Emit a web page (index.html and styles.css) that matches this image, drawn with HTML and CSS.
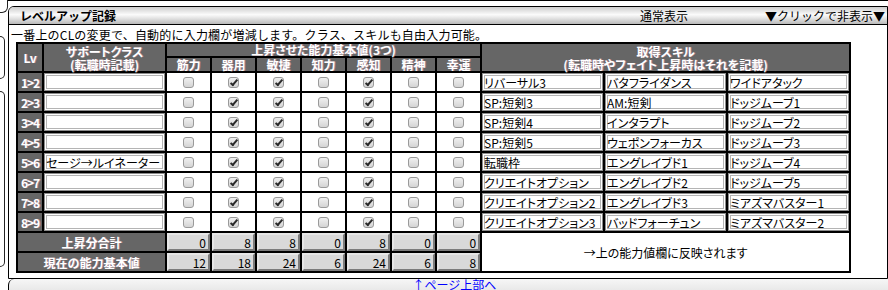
FILE: index.html
```html
<!DOCTYPE html>
<html lang="ja">
<head>
    <meta charset="UTF-8">
    <title>レベルアップ記録</title>
    <link rel="stylesheet" href="styles.css">
</head>
<body>
<div class="page">
    <div class="side">
        <div class="side-tab tab-a"></div>
        <div class="side-tab tab-b"></div>
        <div class="side-tab tab-c"></div>
    </div>

    <div class="main">
        <div class="prev-panel"></div>

        <div class="panel">
            <div class="panel-head">
                <span class="title">レベルアップ記録</span>
                <span class="mode">通常表示</span>
                <span class="toggle">▼クリックで非表示▼</span>
            </div>

            <div class="panel-body">
                <p class="note">一番上のCLの変更で、自動的に入力欄が増減します。クラス、スキルも自由入力可能。</p>

                <table class="lv-table">
                    <colgroup>
                        <col class="c-lv">
                        <col class="c-class">
                        <col class="c-stat"><col class="c-stat"><col class="c-stat"><col class="c-stat">
                        <col class="c-stat"><col class="c-stat"><col class="c-stat">
                        <col class="c-skill"><col class="c-skill"><col class="c-skill">
                    </colgroup>
                    <thead>
                        <tr class="h-top">
                            <th rowspan="2">Lv</th>
                            <th rowspan="2" class="two-line">サポートクラス<br>(転職時記載)</th>
                            <th colspan="7">上昇させた能力基本値(3つ)</th>
                            <th colspan="3" rowspan="2" class="two-line">取得スキル<br>(転職時やフェイト上昇時はそれを記載)</th>
                        </tr>
                        <tr class="h-sub">
                            <th>筋力</th><th>器用</th><th>敏捷</th><th>知力</th><th>感知</th><th>精神</th><th>幸運</th>
                        </tr>
                    </thead>
                    <tbody id="levelRows">
                        <!-- rows are built by the script below -->
                    </tbody>
                    <tbody>
                        <tr class="sum-row">
                            <th colspan="2">上昇分合計</th>
                            <td><input class="in-num" type="text" value="0" readonly></td>
                            <td><input class="in-num" type="text" value="8" readonly></td>
                            <td><input class="in-num" type="text" value="8" readonly></td>
                            <td><input class="in-num" type="text" value="0" readonly></td>
                            <td><input class="in-num" type="text" value="8" readonly></td>
                            <td><input class="in-num" type="text" value="0" readonly></td>
                            <td><input class="in-num" type="text" value="0" readonly></td>
                            <td colspan="3" rowspan="2" class="reflect">→上の能力値欄に反映されます</td>
                        </tr>
                        <tr class="sum-row">
                            <th colspan="2">現在の能力基本値</th>
                            <td><input class="in-num" type="text" value="12" readonly></td>
                            <td><input class="in-num" type="text" value="18" readonly></td>
                            <td><input class="in-num" type="text" value="24" readonly></td>
                            <td><input class="in-num" type="text" value="6" readonly></td>
                            <td><input class="in-num" type="text" value="24" readonly></td>
                            <td><input class="in-num" type="text" value="6" readonly></td>
                            <td><input class="in-num" type="text" value="8" readonly></td>
                        </tr>
                    </tbody>
                </table>
            </div>
        </div>

        <div class="page-foot"><a href="#top">↑ページ上部へ</a></div>
    </div>
</div>

<script>
    // レベルごとの記録
    const levels = [
        { cls: "", skills: ["リバーサル3", "バタフライダンス", "ワイドアタック"] },
        { cls: "", skills: ["SP:短剣3", "AM:短剣", "ドッジムーブ1"] },
        { cls: "", skills: ["SP:短剣4", "インタラプト", "ドッジムーブ2"] },
        { cls: "", skills: ["SP:短剣5", "ウェポンフォーカス", "ドッジムーブ3"] },
        { cls: "セージ→ルイネーター", skills: ["転職枠", "エングレイブド1", "ドッジムーブ4"] },
        { cls: "", skills: ["クリエイトオプション", "エングレイブド2", "ドッジムーブ5"] },
        { cls: "", skills: ["クリエイトオプション2", "エングレイブド3", "ミアズマバスター1"] },
        { cls: "", skills: ["クリエイトオプション3", "バッドフォーチュン", "ミアズマバスター2"] }
    ];
    // 筋力 器用 敏捷 知力 感知 精神 幸運
    const picks = [false, true, true, false, true, false, false];

    const tbody = document.getElementById('levelRows');
    levels.forEach((lv, i) => {
        const row = document.createElement('tr');
        let html = `<th class="lv">${i + 1}&gt;${i + 2}</th>`;
        html += `<td><input class="in-text" type="text" value="${lv.cls}"></td>`;
        picks.forEach(on => {
            html += `<td class="chk-cell"><input class="chk" type="checkbox"${on ? ' checked' : ''}></td>`;
        });
        lv.skills.forEach(s => {
            html += `<td><input class="in-text" type="text" value="${s}"></td>`;
        });
        row.innerHTML = html;
        tbody.appendChild(row);
    });
</script>
</body>
</html>
```

FILE: styles.css
```css
body {
    margin: 0;
    font-family: "Noto Sans CJK JP", sans-serif;
    font-size: 12px;
    color: #000;
    background: #fff;
    overflow: hidden;
}
.page {
    display: flex;
}

/* tabs of the side menu, only their edge shows */
.side {
    width: 8px;
    flex-shrink: 0;
}
.side-tab {
    border: 1px solid #222;
    border-left: none;
    border-radius: 0 6px 6px 0;
}
.tab-a {
    width: 7px;
    height: 31px;
    margin-top: -20px;
}
.tab-b {
    width: 4px;
    height: 41px;
    margin-top: 23px;
}
.tab-c {
    width: 4px;
    height: 174px;
    margin-top: 12px;
}

.main {
    width: 880px;
    flex-shrink: 0;
}
.prev-panel {
    height: 0;
    border-bottom: 1px solid #000;
}

.panel {
    margin-top: 5px;
    border: 1px solid #000;
    border-top-left-radius: 6px;
}
.panel-head {
    display: flex;
    height: 17px;
    line-height: 17px;
    padding: 0 2px 0 11px;
    border-bottom: 1px solid #000;
    border-top-left-radius: 5px;
    background: linear-gradient(#cdcdcd, #fbfbfb 45%, #e8e8e8 62%, #bababa);
}
.title {
    font-weight: bold;
}
.mode {
    margin-left: auto;
}
.toggle {
    margin-left: 77px;
}
.panel-body {
    padding: 3px 0 5px 2px;
}
.note {
    margin: 0;
    line-height: 14px;
    letter-spacing: 0.2px;
}

.lv-table {
    margin-left: 5px;
    width: 835px;
    table-layout: fixed;
    border: 1px solid #000;
    border-spacing: 0;
    font-feature-settings: "palt" 1;
}
.c-lv { width: 26px; }
.c-class { width: 123px; }
.c-stat { width: 45px; }
.c-skill { width: 123px; }

.lv-table th, .lv-table td {
    border: 1px solid #000;
    padding: 0;
}
.lv-table th {
    background: #666;
    color: #fff;
    font-weight: bold;
    text-shadow: 1px 0 0 rgba(255, 170, 210, 0.45);
    line-height: 13px;
    white-space: nowrap;
}
.h-top th {
    height: 12px;
    line-height: 12px;
}
.h-top th.two-line {
    line-height: 13px;
}
.h-sub th {
    height: 13px;
}
.lv-table th.lv {
    letter-spacing: -1px;
}
.chk-cell {
    text-align: center;
}

.in-text {
    display: block;
    width: 100%;
    height: 18px;
    box-sizing: border-box;
    margin: 0;
    padding: 0 1px;
    border: 1px solid #8c8c8c;
    box-shadow: inset 0 0 0 1px #fff, inset 0 0 0 2px #b4b4b4;
    font: inherit;
    color: #000;
    background: #fff;
}

.chk {
    appearance: none;
    position: relative;
    display: block;
    width: 11px;
    height: 11px;
    margin: 0 auto;
    border: 1px solid #9a9a9a;
    border-radius: 3px;
    background: linear-gradient(#f0f0f0, #d4d4d4);
}
.chk:checked::after {
    content: "";
    position: absolute;
    left: 3px;
    top: 0;
    width: 2px;
    height: 6px;
    border: solid #2b2b2b;
    border-width: 0 2px 2px 0;
    transform: rotate(40deg);
}

.sum-row th {
    height: 18px;
}
.in-num {
    display: block;
    width: 100%;
    height: 18px;
    box-sizing: border-box;
    margin: 0;
    padding: 0 2px;
    border: 2px solid;
    border-color: #e6e6e6 #7c7c7c #7c7c7c #e6e6e6;
    background: #d9d9d9;
    font: inherit;
    color: #000;
    text-align: right;
}
.reflect {
    text-align: center;
    background: #fff;
}

.page-foot {
    height: 20px;
    padding-left: 12px;
    line-height: 11px;
    text-align: center;
    border-left: 1px solid #000;
    border-top-left-radius: 6px;
    background: linear-gradient(#f6f6f6, #dedede);
}
.page-foot a {
    color: #00f;
    text-decoration: none;
}
```
